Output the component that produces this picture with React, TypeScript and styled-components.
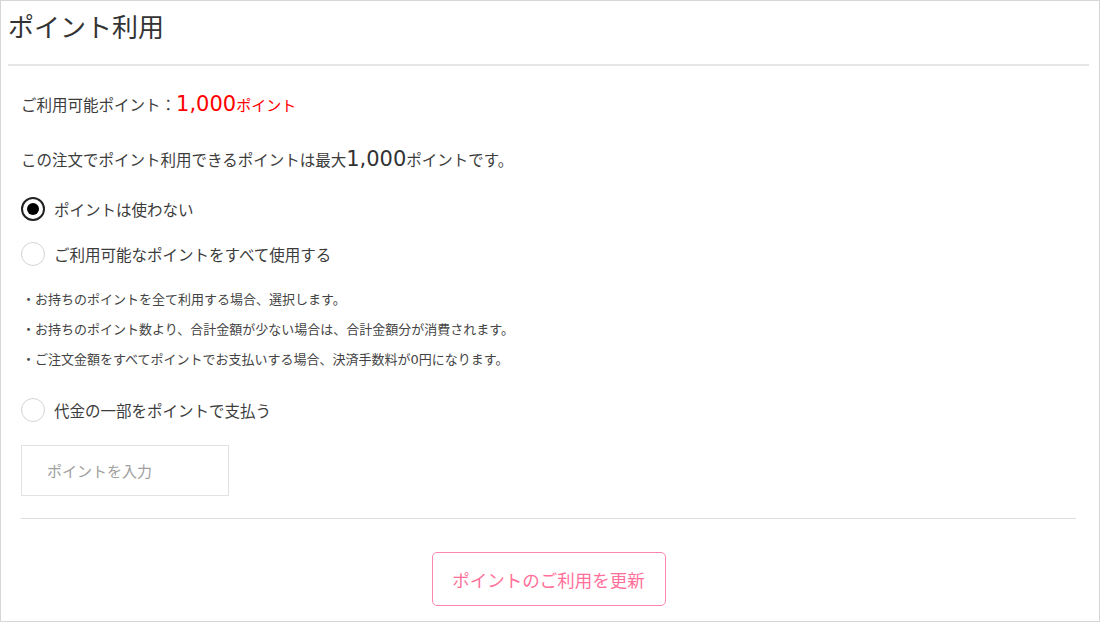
import styled, { createGlobalStyle } from "styled-components";
import { useState } from "react";

const GlobalStyle = createGlobalStyle`
html, body {
  margin: 0;
  padding: 0;
  background: #fff;
}
body {
  font-family: "DejaVu Sans", "Noto Sans CJK JP", "Noto Sans", sans-serif;
  color: #3c3c3c;
}
* { box-sizing: border-box; }
`;

const Frame = styled.div`
width: 1100px;
height: 622px;
border: 1px solid #d6d6d6;
background: #fff;
overflow: hidden;
`;

const Header = styled.div`
height: 65px;
margin: 0 10px 0 7px;
padding-top: 7px;
border-bottom: 2px solid #e6e6e6;
`;

const Title = styled.h1`
margin: 0;
font-family: "Noto Sans CJK JP", sans-serif;
font-size: 26px;
font-weight: 400;
line-height: 36px;
color: #333;
`;

const Body = styled.div`
padding: 0 23px 0 20px;
display: flex;
flex-direction: column;
`;

const Line = styled.p<{ $top: number }>`
margin: ${(p) => p.$top}px 0 0;
font-size: 15.5px;
line-height: 30px;
height: 30px;
display: flex;
align-items: baseline;
`;

const Big = styled.span<{ $red?: boolean }>`
font-size: 21px;
color: ${(p) => (p.$red ? "#ff0000" : "#333")};
`;

const Red = styled.span`
color: #ff0000;
font-size: 15px;
`;

const RadioRow = styled.label<{ $top: number }>`
margin-top: ${(p) => p.$top}px;
display: flex;
align-items: center;
gap: 9px;
height: 30px;
font-size: 15.5px;
cursor: pointer;
`;

const Circle = styled.span<{ $on: boolean }>`
width: 24px;
height: 24px;
border-radius: 50%;
border: ${(p) => (p.$on ? "2px solid #222" : "1px solid #d4d4d4")};
display: flex;
align-items: center;
justify-content: center;
flex-shrink: 0;
&::after {
  content: "";
  width: 12px;
  height: 12px;
  border-radius: 50%;
  background: #000;
  display: ${(p) => (p.$on ? "block" : "none")};
}
`;

const Notes = styled.ul`
list-style: none;
margin: 16px 0 0;
padding: 0 0 0 1px;
font-size: 13px;
line-height: 30px;
color: #444;
`;

const PointInput = styled.input`
margin-top: 20px;
width: 208px;
height: 51px;
border: 1px solid #e2e2e2;
padding: 0 0 0 25px;
font-family: "Noto Sans CJK JP", sans-serif;
font-size: 15px;
color: #333;
outline: none;
&::placeholder { color: #a0a0a0; }
`;

const Divider = styled.hr`
margin: 22px 0 0;
border: 0;
border-top: 1px solid #dcdcdc;
`;

const Actions = styled.div`
display: flex;
justify-content: center;
margin-top: 33px;
`;

const UpdateButton = styled.button`
width: 234px;
height: 54px;
border: 1px solid #ff86ab;
border-radius: 5px;
background: #fff;
color: #ff6f99;
font-family: "Noto Sans CJK JP", sans-serif;
font-size: 17.5px;
cursor: pointer;
`;

const options = [
  { label: "ポイントは使わない", top: 20 },
  { label: "ご利用可能なポイントをすべて使用する", top: 15 },
];

export default function App() {
  const [choice, setChoice] = useState(0);
  return (
    <Frame>
      <GlobalStyle />
      <Header>
        <Title>ポイント利用</Title>
      </Header>
      <Body>
        <Line $top={23}>
          ご利用可能ポイント：<Big $red>1,000</Big>
          <Red>ポイント</Red>
        </Line>
        <Line $top={25}>
          この注文でポイント利用できるポイントは最大<Big>1,000</Big>ポイントです。
        </Line>
        {options.map((o, i) => (
          <RadioRow key={o.label} $top={o.top} onClick={() => setChoice(i)}>
            <Circle $on={choice === i} />
            {o.label}
          </RadioRow>
        ))}
        <Notes>
          <li>・お持ちのポイントを全て利用する場合、選択します。</li>
          <li>・お持ちのポイント数より、合計金額が少ない場合は、合計金額分が消費されます。</li>
          <li>・ご注文金額をすべてポイントでお支払いする場合、決済手数料が0円になります。</li>
        </Notes>
        <RadioRow $top={20} onClick={() => setChoice(2)}>
          <Circle $on={choice === 2} />
          代金の一部をポイントで支払う
        </RadioRow>
        <PointInput placeholder="ポイントを入力" />
        <Divider />
        <Actions>
          <UpdateButton>ポイントのご利用を更新</UpdateButton>
        </Actions>
      </Body>
    </Frame>
  );
}
